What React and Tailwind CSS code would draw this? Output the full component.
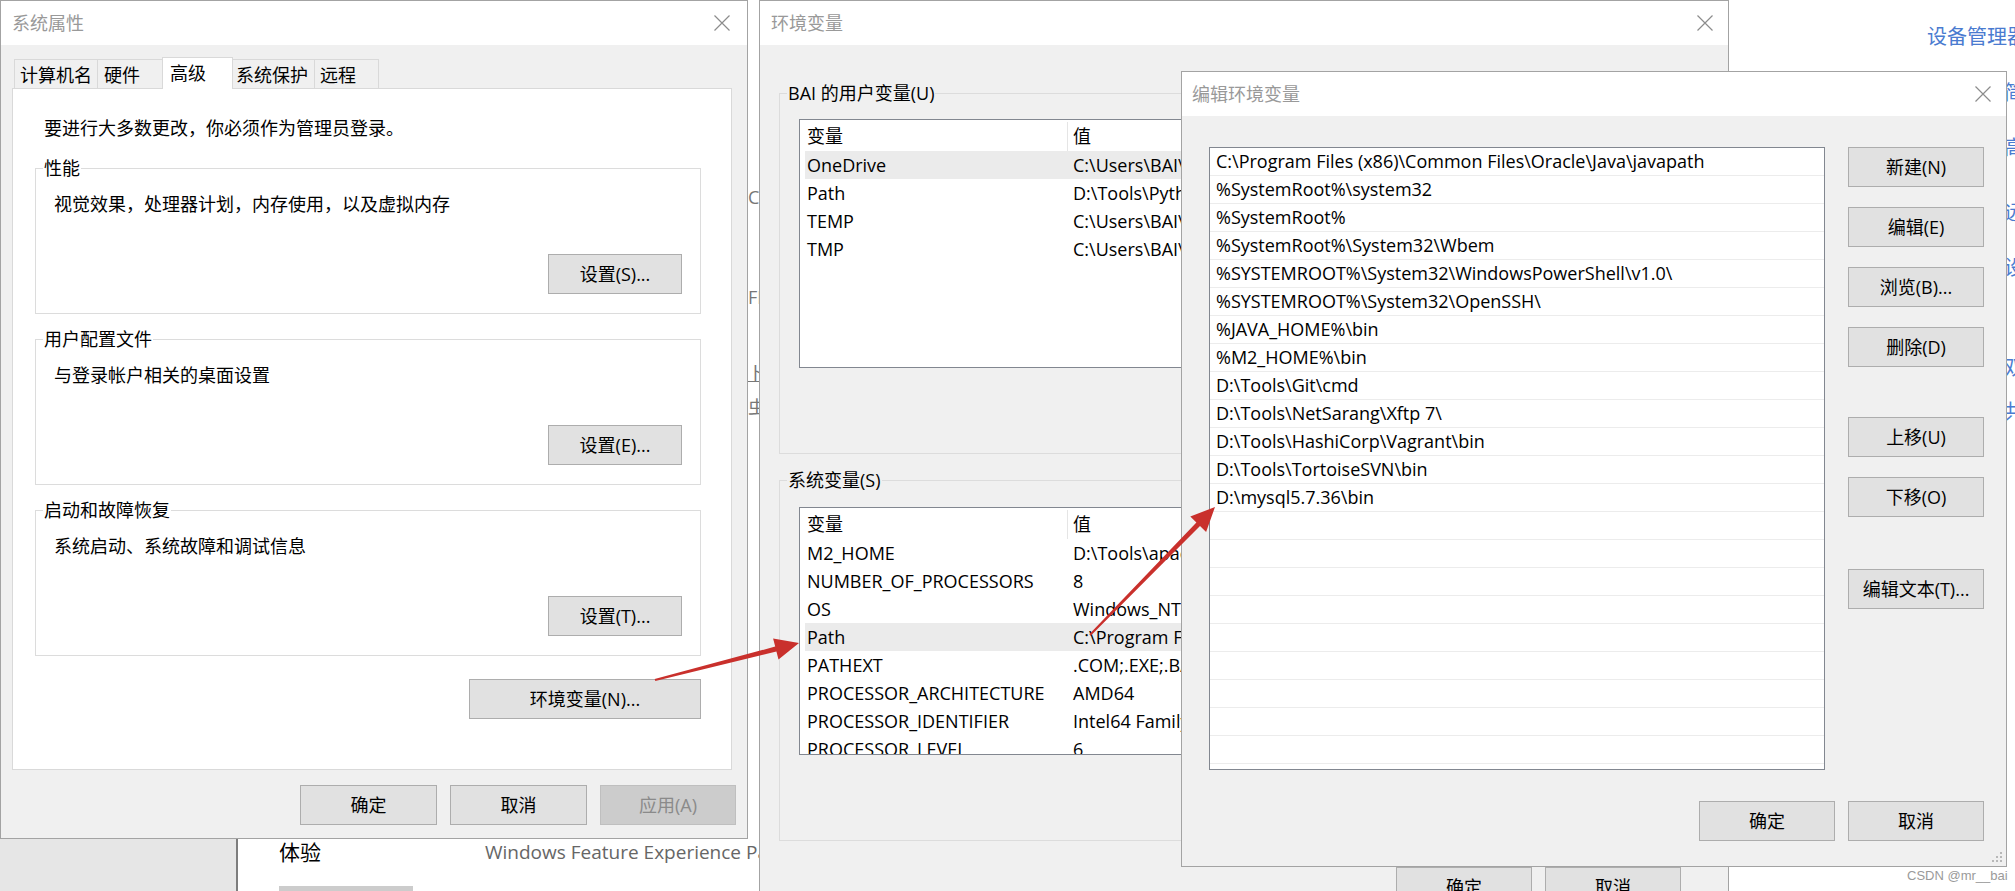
import React from "react";

const F = "[font-family:'Open_Sans','Noto_Sans_CJK_SC',sans-serif]";

const userVars = [
  ["OneDrive", "C:\\Users\\BAI\\OneDrive"],
  ["Path", "D:\\Tools\\Python\\Python39\\Scripts\\;D:\\Tools\\Python\\Python39\\"],
  ["TEMP", "C:\\Users\\BAI\\AppData\\Local\\Temp"],
  ["TMP", "C:\\Users\\BAI\\AppData\\Local\\Temp"],
];

const sysVars = [
  ["M2_HOME", "D:\\Tools\\apache-maven-3.8.4"],
  ["NUMBER_OF_PROCESSORS", "8"],
  ["OS", "Windows_NT"],
  ["Path", "C:\\Program Files (x86)\\Common Files\\Oracle\\Java\\javapath"],
  ["PATHEXT", ".COM;.EXE;.BAT;.CMD;.VBS;.VBE;.JS;.JSE;.WSF;.WSH;.MSC"],
  ["PROCESSOR_ARCHITECTURE", "AMD64"],
  ["PROCESSOR_IDENTIFIER", "Intel64 Family 6 Model 158 Stepping 10"],
  ["PROCESSOR_LEVEL", "6"],
];

const paths = [
  "C:\\Program Files (x86)\\Common Files\\Oracle\\Java\\javapath",
  "%SystemRoot%\\system32",
  "%SystemRoot%",
  "%SystemRoot%\\System32\\Wbem",
  "%SYSTEMROOT%\\System32\\WindowsPowerShell\\v1.0\\",
  "%SYSTEMROOT%\\System32\\OpenSSH\\",
  "%JAVA_HOME%\\bin",
  "%M2_HOME%\\bin",
  "D:\\Tools\\Git\\cmd",
  "D:\\Tools\\NetSarang\\Xftp 7\\",
  "D:\\Tools\\HashiCorp\\Vagrant\\bin",
  "D:\\Tools\\TortoiseSVN\\bin",
  "D:\\mysql5.7.36\\bin",
];

function CloseX() {
  return (
    <svg width="16" height="16" viewBox="0 0 16 16">
      <path d="M0.5 0.5 L15.5 15.5 M15.5 0.5 L0.5 15.5" stroke="#8c8c8c" strokeWidth="1.2" fill="none" />
    </svg>
  );
}

function Btn({ children, className = "", disabled = false }) {
  return (
    <div
      className={
        "flex items-center justify-center border text-[18px] leading-none shrink-0 " +
        (disabled ? "bg-[#cccccc] border-[#bfbfbf] text-[#8a8a8a]" : "bg-[#e1e1e1] border-[#adadad] text-black") +
        " " +
        className
      }
    >
      {children}
    </div>
  );
}

function Group({ legend, bg, className = "", children }) {
  return (
    <div className={"relative border border-[#dcdcdc] " + className}>
      <span className={"absolute left-[7px] -top-[13px] px-px text-[18px] leading-[24px] whitespace-nowrap " + bg}>{legend}</span>
      {children}
    </div>
  );
}

function VarList({ rows, selected, className = "" }) {
  return (
    <div className={"border border-[#828790] bg-white overflow-hidden " + className}>
      <div className="h-[31px] flex text-[18px] leading-[28px] pt-[2px]">
        <div className="w-[268px] pl-[7px] border-r border-[#e5e5e5] shrink-0">变量</div>
        <div className="pl-[5px]">值</div>
      </div>
      {rows.map(([k, v], i) => (
        <div
          key={i}
          className={
            "ml-[5px] h-[28px] flex items-center text-[18px] leading-[28px] whitespace-nowrap " +
            (i === selected ? "bg-[#ebebeb]" : "")
          }
        >
          <div className="w-[268px] pl-[2px] shrink-0">{k}</div>
          <div>{v}</div>
        </div>
      ))}
    </div>
  );
}

function SettingGroup({ legend, text, btn }) {
  return (
    <Group legend={legend} bg="bg-white" className="ml-[22px] w-[666px] h-[146px] flex flex-col pl-[18px] pr-[18px] pt-[23px] pb-[19px]">
      <div className="text-[18px] leading-[24px]">{text}</div>
      <Btn className="mt-auto self-end w-[134px] h-[40px]">{btn}</Btn>
    </Group>
  );
}

function Tab({ children, className = "", selected = false }) {
  return (
    <div
      className={
        "border border-b-0 border-[#d9d9d9] text-[18px] leading-[24px] shrink-0 " +
        (selected ? "bg-white h-[32px] pt-[3px] relative z-10" : "bg-[#f0f0f0] h-[30px] pt-[3px]") +
        " " +
        className
      }
    >
      {children}
    </div>
  );
}

function SystemProps() {
  return (
    <div className="absolute left-0 top-0 w-[748px] h-[839px] border border-[#a3a3a3] bg-[#f0f0f0] flex flex-col">
      <div className="h-[44px] bg-white flex items-center justify-between pl-[11px] pr-[17px] shrink-0">
        <span className="text-[18px] leading-none text-[#999999]">系统属性</span>
        <CloseX />
      </div>
      <div className="px-[11px] pt-[12px] flex flex-col">
        <div className="h-[32px] flex items-end pl-[2px]">
          <Tab className="w-[84px] pl-[5px]">计算机名</Tab>
          <Tab className="w-[66px] pl-[6px] -ml-px">硬件</Tab>
          <Tab className="w-[71px] pl-[7px] -ml-px" selected>高级</Tab>
          <Tab className="w-[83px] pl-[3px] -ml-px">系统保护</Tab>
          <Tab className="w-[65px] pl-[5px] -ml-px">远程</Tab>
        </div>
        <div className="-mt-px w-[720px] h-[682px] bg-white border border-[#d9d9d9] flex flex-col">
          <div className="ml-[31px] mt-[27px] text-[18px] leading-[24px]">要进行大多数更改，你必须作为管理员登录。</div>
          <div className="mt-[28px] flex flex-col gap-[25px]">
            <SettingGroup legend="性能" text="视觉效果，处理器计划，内存使用，以及虚拟内存" btn="设置(S)..." />
            <SettingGroup legend="用户配置文件" text="与登录帐户相关的桌面设置" btn="设置(E)..." />
            <SettingGroup legend="启动和故障恢复" text="系统启动、系统故障和调试信息" btn="设置(T)..." />
          </div>
          <Btn className="ml-[456px] mt-[23px] w-[232px] h-[40px]">环境变量(N)...</Btn>
        </div>
        <div className="mt-[15px] flex justify-end gap-[13px]">
          <Btn className="w-[137px] h-[40px]">确定</Btn>
          <Btn className="w-[137px] h-[40px]">取消</Btn>
          <Btn className="w-[136px] h-[40px]" disabled>应用(A)</Btn>
        </div>
      </div>
    </div>
  );
}

function EnvVars() {
  return (
    <div className="absolute left-[759px] top-0 w-[970px] h-[960px] border border-[#a3a3a3] bg-[#f0f0f0] flex flex-col">
      <div className="h-[44px] bg-white flex items-center justify-between pl-[11px] pr-[15px] shrink-0">
        <span className="text-[18px] leading-none text-[#999999]">环境变量</span>
        <CloseX />
      </div>
      <div className="px-[19px] flex flex-col">
        <Group legend="BAI 的用户变量(U)" bg="bg-[#f0f0f0]" className="mt-[48px] h-[361px] px-[19px] pt-[25px] flex flex-col">
          <VarList rows={userVars} selected={0} className="h-[249px]" />
          <div className="mt-[14px] flex justify-end gap-[13px]">
            <Btn className="w-[136px] h-[40px]">新建(N)...</Btn>
            <Btn className="w-[136px] h-[40px]">编辑(E)...</Btn>
            <Btn className="w-[136px] h-[40px]">删除(D)</Btn>
          </div>
        </Group>
        <Group legend="系统变量(S)" bg="bg-[#f0f0f0]" className="mt-[26px] h-[361px] px-[19px] pt-[26px] flex flex-col">
          <VarList rows={sysVars} selected={3} className="h-[248px]" />
        </Group>
        <div className="mt-[26px] flex justify-end gap-[13px] pr-[28px]">
          <Btn className="w-[136px] h-[40px]">确定</Btn>
          <Btn className="w-[136px] h-[40px]">取消</Btn>
        </div>
      </div>
    </div>
  );
}

function Grip() {
  const dots = [
    [8, 0], [8, 4], [4, 4], [8, 8], [4, 8], [0, 8],
  ];
  return (
    <svg width="11" height="11" viewBox="0 0 11 11" className="absolute right-[3px] bottom-[3px]">
      {dots.map(([x, y], i) => (
        <rect key={i} x={x} y={y} width="2" height="2" fill="#b8b8b8" />
      ))}
    </svg>
  );
}

function EditEnv() {
  const rows = [...paths];
  while (rows.length < 23) rows.push("");
  return (
    <div className="absolute left-[1181px] top-[71px] w-[826px] h-[796px] border border-[#a3a3a3] bg-[#f0f0f0] flex flex-col">
      <div className="h-[44px] bg-white flex items-center justify-between pl-[10px] pr-[15px] shrink-0">
        <span className="text-[18px] leading-none text-[#999999]">编辑环境变量</span>
        <CloseX />
      </div>
      <div className="pl-[27px] pt-[31px] flex">
        <div className="w-[616px] h-[623px] border border-[#828790] bg-white overflow-hidden">
          {rows.map((p, i) => (
            <div key={i} className="h-[28px] border-b border-[#ececec] pl-[6px] flex items-center text-[18px] leading-[27px] whitespace-nowrap">
              {p}
            </div>
          ))}
        </div>
        <div className="ml-[23px] flex flex-col">
          <Btn className="w-[136px] h-[40px]">新建(N)</Btn>
          <Btn className="mt-[20px] w-[136px] h-[40px]">编辑(E)</Btn>
          <Btn className="mt-[20px] w-[136px] h-[40px]">浏览(B)...</Btn>
          <Btn className="mt-[20px] w-[136px] h-[40px]">删除(D)</Btn>
          <Btn className="mt-[50px] w-[136px] h-[40px]">上移(U)</Btn>
          <Btn className="mt-[20px] w-[136px] h-[40px]">下移(O)</Btn>
          <Btn className="mt-[52px] w-[136px] h-[40px]">编辑文本(T)...</Btn>
        </div>
      </div>
      <div className="mt-[31px] flex justify-end gap-[13px] pr-[22px]">
        <Btn className="w-[136px] h-[40px]">确定</Btn>
        <Btn className="w-[136px] h-[40px]">取消</Btn>
      </div>
      <Grip />
    </div>
  );
}

function Backdrop() {
  return (
    <>
      <div className="absolute left-0 top-0 w-[238px] h-full bg-[#e6e6e6] border-r-2 border-[#7d7d7d]" />
      <div className="absolute left-[279px] top-[838px] text-[21px] leading-[28px]">体验</div>
      <div className="absolute left-[485px] top-[838px] text-[19px] leading-[28px] text-[#666666] whitespace-nowrap">
        Windows Feature Experience Pack
      </div>
      <div className="absolute left-[279px] top-[886px] w-[134px] h-[10px] bg-[#cccccc]" />
      <div className="absolute left-[748px] top-[185px] text-[18px] leading-[24px] text-[#777777]">CPU</div>
      <div className="absolute left-[748px] top-[285px] text-[18px] leading-[24px] text-[#777777]">FEAT</div>
      <div className="absolute left-[748px] top-[361px] text-[18px] leading-[24px] text-[#777777] underline">卜</div>
      <div className="absolute left-[748px] top-[395px] text-[18px] leading-[24px] text-[#777777]">虫</div>
      <div className="absolute left-[1927px] top-[23px] text-[20px] leading-[28px] text-[#4a7bd0] whitespace-nowrap">设备管理器</div>
      <div className="absolute left-[2004px] top-[80px] flex flex-col text-[20px] leading-[26px] text-[#4a7bd0]">
        <span>简</span>
        <span className="mt-[29px]">高</span>
        <span className="mt-[39px]">远</span>
        <span className="mt-[29px]">设</span>
        <span className="mt-[74px]">双</span>
        <span className="mt-[18px]">共</span>
      </div>
      <div className="absolute left-[1907px] top-[867px] text-[13px] leading-[18px] text-[#9a9a9a] [font-family:'Liberation_Sans',sans-serif] whitespace-nowrap">
        CSDN @mr__bai
      </div>
    </>
  );
}

function Arrows() {
  return (
    <svg className="absolute left-0 top-0 pointer-events-none z-50" width="2015" height="891">
      <polygon points="655.3,681 776.4,651.4 778.5,659.6 799,643 773.1,638.4 775.2,646.6 654.7,679" fill="#c9302c" />
      <polygon points="1090.7,635.7 1200,525.9 1206.1,531.9 1215,507 1190.3,516.5 1196.4,522.5 1089.3,634.3" fill="#c9302c" />
    </svg>
  );
}

export default function App() {
  return (
    <div className={"relative w-[2015px] h-[891px] overflow-hidden bg-white text-black " + F}>
      <Backdrop />
      <SystemProps />
      <EnvVars />
      <EditEnv />
      <Arrows />
    </div>
  );
}
